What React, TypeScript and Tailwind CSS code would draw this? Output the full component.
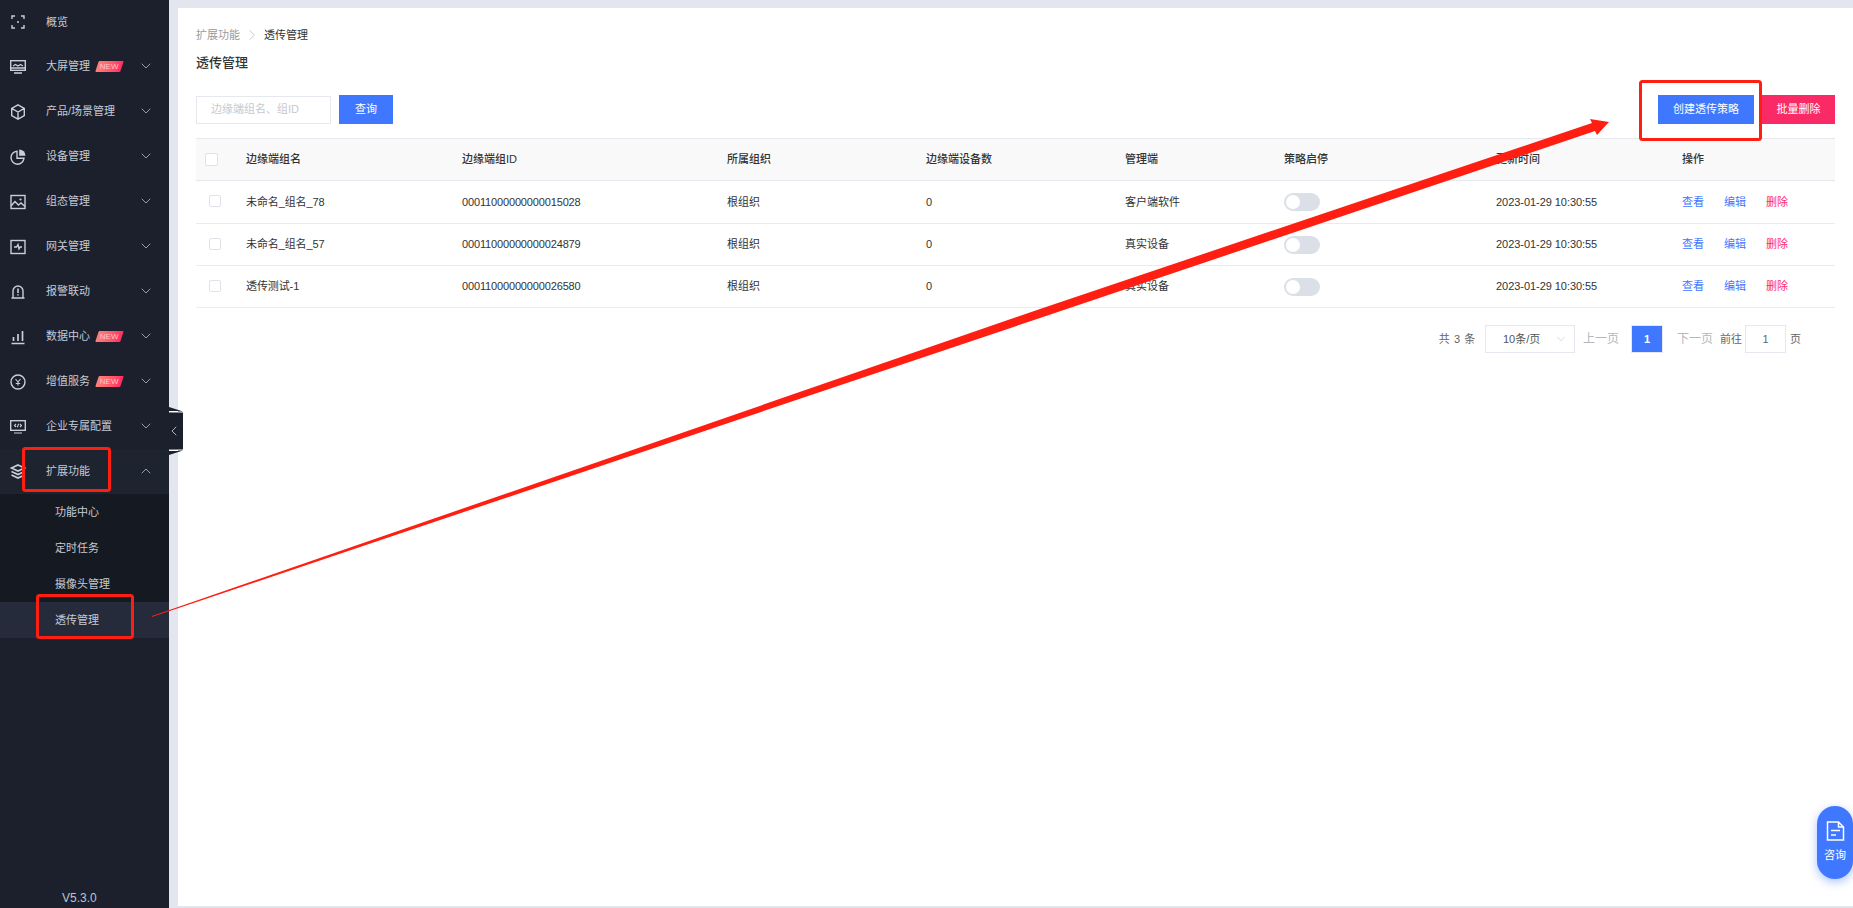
import React from "react";
import { ChevronDown, ChevronRight, ChevronUp, ChevronLeft } from "lucide-react";

const MenuIcon: React.FC<{ name: string }> = ({ name }) => {
  const common = {
    width: 18,
    height: 18,
    viewBox: "0 0 18 18",
    fill: "none",
    stroke: "#c9ced9",
    strokeWidth: 1.4,
  };
  switch (name) {
    case "overview":
      return (
        <svg {...common}>
          <path d="M3 6V3h3M12 3h3v3M15 12v3h-3M6 15H3v-3" />
          <circle cx="9" cy="9" r="1" fill="#c9ced9" stroke="none" />
        </svg>
      );
    case "screen":
      return (
        <svg {...common}>
          <rect x="1.7" y="2.7" width="14.6" height="9.6" />
          <path d="M4 8l2.500-1.500L9 8l2.500-1.500L14 8M1.700 10h14.600M5 15h8" />
        </svg>
      );
    case "box":
      return (
        <svg {...common}>
          <path d="M9 1.800l6.300 3.600v7.200L9 16.200l-6.300-3.600V5.400zM2.700 5.400L9 9l6.300-3.600M9 9v7.200" />
        </svg>
      );
    case "pie":
      return (
        <svg {...common}>
          <path d="M8 3.200a6.500 6.500 0 1 0 7 7H8z" />
          <path d="M10.200 1.500a6.300 6.300 0 0 1 6.300 6.300h-6.300z" fill="#c9ced9" stroke="none" />
        </svg>
      );
    case "image":
      return (
        <svg {...common}>
          <rect x="2" y="2.500" width="14" height="13" />
          <path d="M2 13l4-4.500 3.500 3.500 2.500-2 4 3.500" />
          <circle cx="11.500" cy="6.500" r="1.100" fill="#c9ced9" stroke="none" />
        </svg>
      );
    case "gateway":
      return (
        <svg {...common}>
          <rect x="2" y="2.500" width="14" height="13" />
          <path d="M5 9h2.500L9 6.500 10 11l1.200-2H13" />
        </svg>
      );
    case "alarm":
      return (
        <svg {...common}>
          <path d="M4 14.500V8a5 5 0 0 1 10 0v6.500M2.500 15h13" />
          <path d="M9 5.500v4.500M9 11.200v1.400" strokeWidth="1.600" />
        </svg>
      );
    case "data":
      return (
        <svg {...common}>
          <path d="M2.500 15.500h13M4.500 9v4M9 6v7M13.500 3v10" strokeWidth="1.700" />
        </svg>
      );
    case "service":
      return (
        <svg {...common}>
          <circle cx="9" cy="9" r="7" />
          <path d="M6.500 6L9 9l2.500-3M9 9v3.500M6.800 10.500h4.400" strokeWidth="1.100" />
        </svg>
      );
    case "enterprise":
      return (
        <svg {...common}>
          <rect x="1.700" y="2.700" width="14.600" height="9.600" />
          <path d="M7 6L5.500 7.500 7 9M11 6l1.500 1.500L11 9M9.700 5.700L8.300 9.300M5 15h8" strokeWidth="1.100" />
        </svg>
      );
    default:
      return (
        <svg {...common}>
          <path d="M9 2l6.500 3L9 8 2.500 5zM2.500 8.500L9 11.500l6.500-3M2.500 12L9 15l6.500-3" strokeWidth="1.600" />
        </svg>
      );
  }
};

const NewBadge = () => (
  <span className="ml-[7px] mt-[-1px] flex h-[11px] w-[25px] -skew-x-[18deg] items-center justify-center rounded-[1px] bg-gradient-to-r from-[#ff8078] to-[#ff2a62]">
    <span className="skew-x-[18deg] text-[8px] leading-none text-[#ffc4c8]">NEW</span>
  </span>
);

const menus = [
  { icon: "overview", label: "概览", arrow: false, badge: false },
  { icon: "screen", label: "大屏管理", arrow: true, badge: true },
  { icon: "box", label: "产品/场景管理", arrow: true, badge: false },
  { icon: "pie", label: "设备管理", arrow: true, badge: false },
  { icon: "image", label: "组态管理", arrow: true, badge: false },
  { icon: "gateway", label: "网关管理", arrow: true, badge: false },
  { icon: "alarm", label: "报警联动", arrow: true, badge: false },
  { icon: "data", label: "数据中心", arrow: true, badge: true },
  { icon: "service", label: "增值服务", arrow: true, badge: true },
  { icon: "enterprise", label: "企业专属配置", arrow: true, badge: false },
];

const subMenus = ["功能中心", "定时任务", "摄像头管理", "透传管理"];

const Sidebar = () => (
  <aside className="flex h-full w-[169px] shrink-0 flex-col bg-[#1c202c] text-[11px] text-[#c5cad5]">
    {menus.map((m, i) => (
      <div
        key={m.label}
        className={`flex items-center pl-[9px] pr-[15px] ${i === 0 ? "h-[44px]" : "h-[45px]"}`}
      >
        <MenuIcon name={m.icon} />
        <span className="ml-[19px] whitespace-nowrap">{m.label}</span>
        {m.badge && <NewBadge />}
        {m.arrow && (
          <ChevronDown size={16} strokeWidth={1.3} className="ml-auto mt-[-2px] text-[#aab0bd]" />
        )}
      </div>
    ))}
    <div className="flex h-[45px] items-center bg-[#1e2330] pl-[9px] pr-[15px]">
      <MenuIcon name="layers" />
      <span className="ml-[19px]">扩展功能</span>
      <ChevronUp size={16} strokeWidth={1.3} className="ml-auto mt-[-2px] text-[#aab0bd]" />
    </div>
    <div className="bg-[#151921]">
      {subMenus.map((s, i) => (
        <div
          key={s}
          className={`flex h-[36px] items-center pl-[55px] ${i === 3 ? "bg-[#252b3a]" : ""}`}
        >
          {s}
        </div>
      ))}
    </div>
    <div className="mt-auto pb-[3px] pl-[62px] text-[12px] leading-[14px] text-[#bcc3d0]">V5.3.0</div>
  </aside>
);

const columns = "grid-cols-[50px_216px_265px_199px_199px_159px_212px_186px_153px]";

const rows = [
  { name: "未命名_组名_78", id: "00011000000000015028", client: "客户端软件", cls: "h-[43px]" },
  { name: "未命名_组名_57", id: "00011000000000024879", client: "真实设备", cls: "h-[42px]" },
  { name: "透传测试-1", id: "00011000000000026580", client: "真实设备", cls: "h-[42px]" },
];

const Table = () => (
  <div className="mt-[14px] text-[11px] text-[#333]">
    <div className={`grid h-[43px] items-center border-y border-[#e6e8f0] bg-[#f9f9fa] font-medium ${columns}`}>
      <span className="ml-[9px] h-[13px] w-[13px] rounded-[2px] border border-[#dfe2ea] bg-white" />
      <span>边缘端组名</span>
      <span>边缘端组ID</span>
      <span>所属组织</span>
      <span>边缘端设备数</span>
      <span>管理端</span>
      <span>策略启停</span>
      <span>更新时间</span>
      <span>操作</span>
    </div>
    {rows.map((r) => (
      <div key={r.id} className={`grid items-center border-b border-[#e9ebf2] ${columns} ${r.cls}`}>
        <span className="ml-[13px] mt-[-2px] h-[12px] w-[12px] rounded-[2px] border border-[#dfe2ea]" />
        <span className="tracking-[-0.1px]">{r.name}</span>
        <span className="tracking-[-0.15px]">{r.id}</span>
        <span>根组织</span>
        <span>0</span>
        <span>{r.client}</span>
        <span className="flex h-[18px] w-[36px] items-center rounded-full bg-[#dbdfe8] pl-[2px]">
          <span className="h-[14px] w-[14px] rounded-full bg-white" />
        </span>
        <span className="tracking-[-0.05px]">2023-01-29 10:30:55</span>
        <span className="flex gap-[20px]">
          <span className="text-[#3f77fe]">查看</span>
          <span className="text-[#3f77fe]">编辑</span>
          <span className="text-[#fb2c6a]">删除</span>
        </span>
      </div>
    ))}
  </div>
);

const Pagination = () => (
  <div className="mt-[17px] flex h-[28px] items-center justify-end pr-[34px] text-[11px] text-[#666]">
    <span className="tracking-[0.6px]">共 3 条</span>
    <div className="ml-[9px] flex h-[28px] w-[90px] items-center border border-[#e6e8f0] pl-[17px] text-[#555]">
      10条/页
      <ChevronDown size={14} strokeWidth={1.2} className="ml-auto mr-[6px] text-[#c6cad3]" />
    </div>
    <span className="ml-[8px] text-[12px] text-[#b4b7bd]">上一页</span>
    <span className="ml-[12px] flex h-[28px] w-[32px] items-center justify-center border border-[#e6e8f0] bg-[#3f77fe] font-bold text-white">
      1
    </span>
    <span className="ml-[14px] text-[12px] text-[#b4b7bd]">下一页</span>
    <span className="ml-[7px]">前往</span>
    <span className="ml-[3px] flex h-[28px] w-[41px] items-center justify-center border border-[#e6e8f0]">1</span>
    <span className="ml-[4px]">页</span>
  </div>
);

const Content = () => (
  <main className="mb-[2px] ml-[9px] mt-[8px] flex-1 bg-white pl-[18px] pr-[18px]">
    <div className="mt-[20px] flex h-[14px] items-center text-[11px] leading-[14px]">
      <span className="text-[#9a9a9a]">扩展功能</span>
      <ChevronRight size={18} strokeWidth={0.8} className="ml-[3px] mr-[3px] text-[#aaa]" />
      <span className="text-[#333]">透传管理</span>
    </div>
    <h1 className="mt-[12px] text-[13px] font-medium leading-[18px] text-[#333]">透传管理</h1>
    <div className="mt-[23px] flex h-[29px] items-center">
      <div className="flex h-[28px] w-[135px] items-center border border-[#e6e8f0] pl-[14px] text-[11px] text-[#c6c9d0]">
        边缘端组名、组ID
      </div>
      <button className="ml-[8px] h-[29px] w-[54px] bg-[#3f77fe] text-[11px] text-white">查询</button>
      <button className="ml-auto h-[29px] w-[96px] bg-[#3f77fe] text-[11px] text-white">创建透传策略</button>
      <button className="ml-[8px] h-[29px] w-[73px] bg-[#f92a66] text-[11px] text-white">批量删除</button>
    </div>
    <Table />
    <Pagination />
  </main>
);

// 折叠按钮，贴在侧栏右边
const CollapseTab = () => (
  <div className="absolute left-[169px] top-[407px] flex h-[48px] w-[14px] flex-col">
    <svg width="14" height="48" viewBox="0 0 14 48" className="absolute left-0 top-0">
      <path d="M0 0L14 4.500H0zM0 5.500h14v37H0zM0 43.500h14L0 48z" fill="#1c202c" />
      <path d="M0 4.500h9M0 43.500h9" stroke="#ffffff" strokeWidth="1" />
    </svg>
    <ChevronLeft size={16} strokeWidth={1.4} className="absolute left-[-3px] top-[16px] text-[#b6bcc8]" />
  </div>
);

const Annotations = () => (
  <svg width="1853" height="908" viewBox="0 0 1853 908" className="pointer-events-none absolute left-0 top-0" fill="none">
    <rect x="23.500" y="448.500" width="86" height="42" rx="2" stroke="#ff1f12" strokeWidth="3" />
    <rect x="37.500" y="595.500" width="95" height="42" rx="2" stroke="#ff1f12" strokeWidth="3" />
    <rect x="1640.500" y="81.500" width="120" height="58" rx="2" stroke="#ff1f12" strokeWidth="3" />
    <path
      d="M152 616L1040 309L1592 123L1590 119L1609 122L1597 135L1595 131L1040 318L152 617z"
      fill="#ff1f12"
    />
  </svg>
);

const App = () => (
  <div className="relative flex h-[908px] w-[1853px] overflow-hidden bg-[#e3e6ef] font-['Liberation_Sans','Noto_Sans_CJK_SC',sans-serif]">
    <Sidebar />
    <Content />
    <CollapseTab />
    <Annotations />
    <div className="absolute right-0 top-[806px] flex h-[73px] w-[36px] flex-col items-center rounded-full bg-[#3f77fe] pt-[15px] text-[11px] text-white shadow-[0_3px_10px_rgba(63,119,254,0.45)]">
      <svg width="19" height="20" viewBox="0 0 19 20" fill="none" stroke="#fff" strokeWidth="1.500">
        <path d="M1.500 1h11l5 5v13h-16zM12.500 1v5h5M5 9.500h9M5 14h5" />
      </svg>
      <span className="mt-[8px] leading-[13px]">咨询</span>
    </div>
  </div>
);

export default App;
